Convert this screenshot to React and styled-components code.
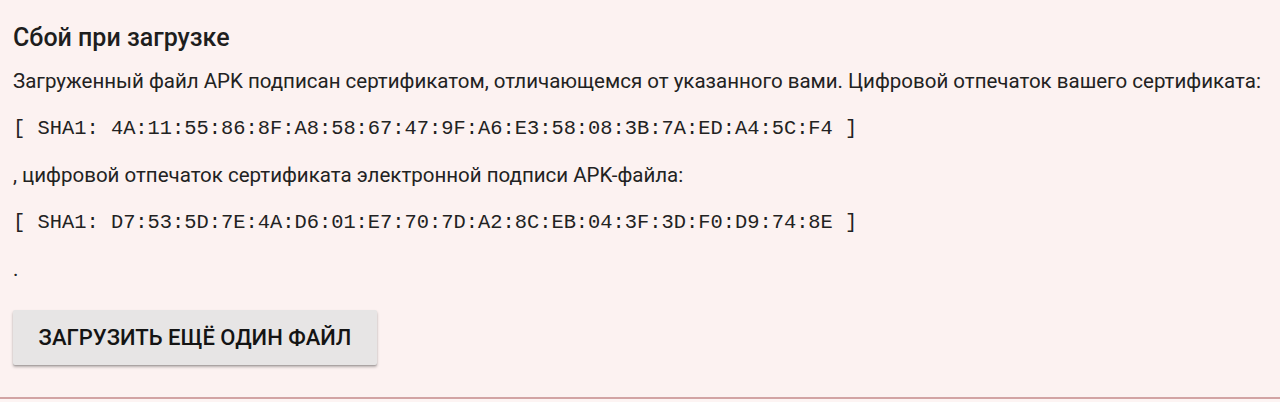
import React from "react";
import styled, { createGlobalStyle } from "styled-components";

const Global = createGlobalStyle`
  html, body { margin: 0; padding: 0; background: #fdf4f3; }
  body { font-family: Roboto, "Noto Sans", sans-serif; color: #212121; }
`;

const Panel = styled.section`
  background: #fcf2f1;
  padding: 21px 13px 32px 13px;
  border-bottom: 2px solid #d2a4a4;
  display: flex;
  flex-direction: column;
  align-items: flex-start;
`;

const Title = styled.h2`
  margin: 0 0 13px 0;
  font-family: Roboto, sans-serif;
  font-weight: 500;
  font-size: 25px;
  line-height: 33px;
  color: #1e1e1e;
`;

const Body = styled.div`
  display: flex;
  flex-direction: column;
  gap: 19px;
`;

const Text = styled.p`
  margin: 0;
  font-family: Roboto, sans-serif;
  font-size: 20.5px;
  line-height: 28px;
  color: #222;
  white-space: nowrap;
`;

const Mono = styled.pre`
  margin: 0;
  padding-top: 2px;
  font-family: "Liberation Mono", "Courier New", monospace;
  font-size: 20.4px;
  line-height: 26px;
  color: #222;
`;

const Button = styled.button`
  margin-top: 27px;
  height: 55px;
  width: 364px;
  border: none;
  border-radius: 2px;
  background: #e7e5e5;
  box-shadow: 0 2px 3px rgba(0, 0, 0, 0.28), 0 1px 1px rgba(0, 0, 0, 0.12);
  font-family: Roboto, sans-serif;
  font-weight: 500;
  font-size: 22px;
  text-transform: uppercase;
  color: #141414;
  padding: 0;
  cursor: pointer;
`;

export default function App() {
  return (
    <>
      <Global />
      <Panel>
        <Title>Сбой при загрузке</Title>
        <Body>
          <Text>
            Загруженный файл APK подписан сертификатом, отличающемся от указанного вами. Цифровой отпечаток вашего сертификата:
          </Text>
          <Mono>[ SHA1: 4A:11:55:86:8F:A8:58:67:47:9F:A6:E3:58:08:3B:7A:ED:A4:5C:F4 ]</Mono>
          <Text>, цифровой отпечаток сертификата электронной подписи APK-файла:</Text>
          <Mono>[ SHA1: D7:53:5D:7E:4A:D6:01:E7:70:7D:A2:8C:EB:04:3F:3D:F0:D9:74:8E ]</Mono>
          <Text>.</Text>
        </Body>
        <Button>Загрузить ещё один файл</Button>
      </Panel>
    </>
  );
}
